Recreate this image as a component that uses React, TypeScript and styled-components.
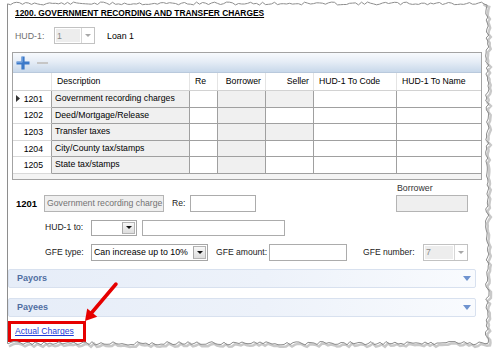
import React from 'react';
import styled, { createGlobalStyle } from 'styled-components';

const GlobalStyle = createGlobalStyle`
  html, body { margin: 0; padding: 0; background: #fff; }
  body { font-family: "Liberation Sans", Arial, sans-serif; color: #000; }
  * { box-sizing: border-box; }
`;

const Page = styled.div`
  position: relative;
  width: 495px;
  height: 350px;
  overflow: hidden;
  background: #fff;
`;

const Sheet = styled.div`
  margin-left: 7px;
  width: 482px;
  height: 350px;
  border-left: 1px solid #8c8c8c;
  display: flex;
  flex-direction: column;
  align-items: flex-start;
`;

const Title = styled.h1`
  margin: 8px 0 0 7px;
  font-size: 8.4px;
  line-height: 11px;
  font-weight: bold;
  text-decoration: underline;
  white-space: nowrap;
`;

const HudRow = styled.div`
  display: flex;
  align-items: center;
  height: 17px;
  margin: 8px 0 0 7px;
  font-size: 8.8px;
`;

const MutedLabel = styled.span`
  width: 39px;
  color: #707070;
`;

const LoanName = styled.span`
  margin-left: 12px;
`;

/* combo box */
const ComboBox = styled.div<{ $w: number; $h: number; $disabled?: boolean }>`
  display: flex;
  width: ${(p) => p.$w}px;
  height: ${(p) => p.$h}px;
  border: 1px solid ${(p) => (p.$disabled ? '#c2c2c2' : '#a6a6a6')};
  background: #fff;
  flex-shrink: 0;
`;

const ComboValue = styled.div<{ $disabled?: boolean }>`
  flex: 1;
  margin: ${(p) => (p.$disabled ? '1px' : '0')};
  padding-left: ${(p) => (p.$disabled ? '1px' : '2px')};
  background: ${(p) => (p.$disabled ? '#ededed' : '#fff')};
  color: ${(p) => (p.$disabled ? '#8a8a8a' : '#000')};
  font-size: 8.8px;
  display: flex;
  align-items: center;
  white-space: nowrap;
  overflow: hidden;
`;

const DropButton = styled.div<{ $disabled?: boolean }>`
  width: 13px;
  display: flex;
  align-items: center;
  justify-content: center;
  margin: ${(p) => (p.$disabled ? '0' : '1px')};
  border: ${(p) => (p.$disabled ? 'none' : '1px solid #b4b4b4')};
  border-left: 1px solid ${(p) => (p.$disabled ? '#d6d6d6' : '#a9a9a9')};
  background: ${(p) => (p.$disabled ? '#fff' : 'linear-gradient(#f7f7f7, #dddddd)')};
`;

const Caret = styled.span<{ $disabled?: boolean }>`
  width: 0;
  height: 0;
  border-left: 3px solid transparent;
  border-right: 3px solid transparent;
  border-top: 3px solid ${(p) => (p.$disabled ? '#a8a8a8' : '#111')};
`;

const Combo = ({ width, height, value, disabled }: { width: number; height: number; value: string; disabled?: boolean }) => (
  <ComboBox $w={width} $h={height} $disabled={disabled}>
    <ComboValue $disabled={disabled}>{value}</ComboValue>
    <DropButton $disabled={disabled}>
      <Caret $disabled={disabled} />
    </DropButton>
  </ComboBox>
);

/* grid */
const COLS = '39px 138px 28px 48px 48px 83px 84px';

const GridPanel = styled.div`
  margin: 8px 0 0 4px;
  width: 470px;
  border: 1px solid #a3a3a3;
  background: #fff;
`;

const Toolbar = styled.div`
  height: 20px;
  display: flex;
  align-items: center;
  gap: 7px;
  padding-left: 3px;
  background: linear-gradient(to bottom, #f7fafd 0%, #e6edf6 45%, #c8d8ea 100%);
  border-bottom: 1px solid #b9c9dc;
`;

const HeaderRow = styled.div`
  display: grid;
  grid-template-columns: ${COLS};
  height: 18px;
  border-bottom: 1px solid #d2d2d2;
`;

const HeaderCell = styled.div<{ $align?: 'left' | 'right'; $last?: boolean }>`
  font-size: 8.7px;
  line-height: 17px;
  padding: 0 4px 0 5px;
  text-align: ${(p) => p.$align ?? 'left'};
  border-right: ${(p) => (p.$last ? 'none' : '1px solid #e4e4e4')};
  white-space: nowrap;
  overflow: hidden;
`;

const BodyRow = styled.div`
  display: grid;
  grid-template-columns: ${COLS};
  height: 16.6px;
`;

const RowHead = styled.div`
  display: flex;
  align-items: center;
  justify-content: space-between;
  padding: 0 8px 0 3px;
  font-size: 8.7px;
  border-right: 1px solid #a0a0a0;
  border-bottom: 1px solid #d9d9d9;
  background: #fff;
`;

const Cell = styled.div<{ $gray?: boolean; $last?: boolean }>`
  font-size: 8.7px;
  line-height: 15.6px;
  padding-left: 3px;
  white-space: nowrap;
  overflow: hidden;
  background: ${(p) => (p.$gray ? '#f0f0f0' : '#fff')};
  border-right: ${(p) => (p.$last ? 'none' : '1px solid #a0a0a0')};
  border-bottom: 1px solid #a0a0a0;
`;

const GridFiller = styled.div`
  height: 5px;
  background: #f4f4f4;
`;

/* form */
const FormRow = styled.div<{ $mt: number; $pl: number; $h: number; $bottom?: boolean }>`
  display: flex;
  align-items: ${(p) => (p.$bottom ? 'flex-end' : 'center')};
  margin-top: ${(p) => p.$mt}px;
  padding-left: ${(p) => p.$pl}px;
  height: ${(p) => p.$h}px;
`;

const FieldLabel = styled.span<{ $w: number; $ml?: number; $bold?: boolean }>`
  width: ${(p) => p.$w}px;
  margin-left: ${(p) => p.$ml ?? 0}px;
  flex-shrink: 0;
  font-size: ${(p) => (p.$bold ? '9.5px' : '8.6px')};
  font-weight: ${(p) => (p.$bold ? 'bold' : 'normal')};
  color: ${(p) => (p.$bold ? '#000' : '#222')};
  white-space: nowrap;
  line-height: 17px;
`;

const TextBox = styled.div<{ $w: number; $h: number; $ml?: number; $disabled?: boolean }>`
  width: ${(p) => p.$w}px;
  height: ${(p) => p.$h}px;
  margin-left: ${(p) => p.$ml ?? 0}px;
  flex-shrink: 0;
  border: 1px solid ${(p) => (p.$disabled ? '#b4b4b4' : '#acacac')};
  background: ${(p) => (p.$disabled ? '#efefef' : '#fff')};
  color: #737373;
  font-size: 8.7px;
  line-height: 15px;
  padding-left: 2px;
  white-space: nowrap;
  overflow: hidden;
`;

const StackedField = styled.div<{ $ml: number }>`
  display: flex;
  flex-direction: column;
  gap: 1px;
  margin-left: ${(p) => p.$ml}px;
`;

const Caption = styled.span`
  font-size: 8.8px;
  line-height: 11px;
  color: #333;
  padding-left: 1px;
`;

const Spacer = styled.span<{ $w: number }>`
  width: ${(p) => p.$w}px;
  flex-shrink: 0;
`;

/* collapsible sections */
const Section = styled.div<{ $mt: number }>`
  margin-top: ${(p) => p.$mt}px;
  width: 468px;
  height: 19px;
  display: flex;
  align-items: center;
  justify-content: space-between;
  padding: 0 4px 0 8px;
  border: 1px solid #d8e1ef;
  border-radius: 2px;
  background: linear-gradient(to right, #e6edf8 0%, #edf2fa 55%, #f9fbfe 100%);
  font-size: 9px;
  font-weight: bold;
  color: #4f6ea2;
`;

const SectionCaret = styled.span`
  width: 0;
  height: 0;
  border-left: 4.5px solid transparent;
  border-right: 4.5px solid transparent;
  border-top: 5px solid #6f93cf;
`;

const Highlight = styled.div`
  margin-top: 4px;
  width: 78px;
  height: 21px;
  border: 3px solid #e60000;
  padding-left: 4px;
  display: flex;
  align-items: center;
`;

const ActionLink = styled.a`
  font-size: 8.6px;
  color: #1c3bd8;
  text-decoration: underline;
  white-space: nowrap;
`;

const Overlay = styled.svg`
  position: absolute;
  left: 0;
  top: 0;
  pointer-events: none;
`;

/* data */
const rows = [
  { no: '1201', desc: 'Government recording charges', sellerGray: true, current: true },
  { no: '1202', desc: 'Deed/Mortgage/Release', sellerGray: false },
  { no: '1203', desc: 'Transfer taxes', sellerGray: true },
  { no: '1204', desc: 'City/County tax/stamps', sellerGray: false },
  { no: '1205', desc: 'State tax/stamps', sellerGray: false },
];

function tornPoints(): string {
  let s = 11;
  const r = () => {
    s = (s * 9301 + 49297) % 233280;
    return s / 233280;
  };
  const pts: string[] = [];
  for (let x = 7.5; x <= 486; x += 3) pts.push(`${x},${(2 + r() * 3).toFixed(1)}`);
  for (let y = 5; y <= 342; y += 3) pts.push(`${(485.5 + r() * 3.5).toFixed(1)},${y}`);
  for (let x = 488; x >= 8; x -= 3) pts.push(`${x},${(341.5 + r() * 3.5).toFixed(1)}`);
  pts.push('7.5,343');
  return pts.join(' ');
}

const TORN = tornPoints();
const SHADOW = TORN.split(' ')
  .filter((p) => {
    const [x, y] = p.split(',').map(Number);
    return x > 480 || y > 330;
  })
  .join(' ');

const TornEdge = () => (
  <Overlay width={495} height={350} viewBox="0 0 495 350">
    <path d={`M0 0H495V350H0Z M${TORN.replace(/ /g, ' L')}Z`} fill="#fff" fillRule="evenodd" />
    <polyline points={SHADOW} transform="translate(2,2)" fill="none" stroke="#c9c9c9" strokeWidth={2.5} />
    <polygon points={TORN} fill="none" stroke="#8e8e8e" strokeWidth={1} />
  </Overlay>
);

const PointerArrow = () => (
  <Overlay width={495} height={350} viewBox="0 0 495 350">
    <line x1={116} y1={284} x2={91} y2={313.5} stroke="#e60000" strokeWidth={3.5} strokeLinecap="round" />
    <polygon points="85,321 97.2,316.8 87.2,308.4" fill="#e60000" />
  </Overlay>
);

export default function App() {
  return (
    <Page>
      <GlobalStyle />
      <Sheet>
        <Title>1200. GOVERNMENT RECORDING AND TRANSFER CHARGES</Title>

        <HudRow>
          <MutedLabel>HUD-1:</MutedLabel>
          <Combo width={41} height={17} value="1" disabled />
          <LoanName>Loan 1</LoanName>
        </HudRow>

        <GridPanel>
          <Toolbar>
            <svg width={14} height={14} viewBox="0 0 14 14">
              <path d="M7 0.5V13.5M0.5 7H13.5" stroke="#3b79c9" strokeWidth={3.2} />
              <path d="M6.2 1V6.2H1" stroke="#8fb8e8" strokeWidth={0.8} fill="none" />
            </svg>
            <svg width={11} height={4} viewBox="0 0 11 4">
              <rect x={0} y={1} width={11} height={2} fill="#c6c6c6" />
            </svg>
          </Toolbar>
          <HeaderRow>
            <HeaderCell />
            <HeaderCell>Description</HeaderCell>
            <HeaderCell>Re</HeaderCell>
            <HeaderCell $align="right">Borrower</HeaderCell>
            <HeaderCell $align="right">Seller</HeaderCell>
            <HeaderCell>HUD-1 To Code</HeaderCell>
            <HeaderCell $last>HUD-1 To Name</HeaderCell>
          </HeaderRow>
          {rows.map((row) => (
            <BodyRow key={row.no}>
              <RowHead>
                {row.current ? (
                  <svg width={4} height={7} viewBox="0 0 4 7">
                    <path d="M0 0L4 3.5L0 7Z" fill="#333" />
                  </svg>
                ) : (
                  <span />
                )}
                <span>{row.no}</span>
              </RowHead>
              <Cell $gray>{row.desc}</Cell>
              <Cell />
              <Cell $gray />
              <Cell $gray={row.sellerGray} />
              <Cell />
              <Cell $last />
            </BodyRow>
          ))}
          <GridFiller />
        </GridPanel>

        <FormRow $mt={3} $pl={8} $h={29} $bottom>
          <FieldLabel $w={28} $bold>1201</FieldLabel>
          <TextBox $w={120} $h={17} $disabled>Government recording charge</TextBox>
          <FieldLabel $w={18} $ml={8}>Re:</FieldLabel>
          <TextBox $w={66} $h={17} />
          <StackedField $ml={140}>
            <Caption>Borrower</Caption>
            <TextBox $w={72} $h={17} $disabled />
          </StackedField>
        </FormRow>

        <FormRow $mt={8} $pl={37} $h={16}>
          <FieldLabel $w={46}>HUD-1 to:</FieldLabel>
          <Combo width={46} height={16} value="" />
          <TextBox $w={143} $h={16} $ml={5} />
        </FormRow>

        <FormRow $mt={8} $pl={37} $h={17}>
          <FieldLabel $w={46}>GFE type:</FieldLabel>
          <Combo width={117} height={17} value="Can increase up to 10%" />
          <FieldLabel $w={53} $ml={8}>GFE amount:</FieldLabel>
          <TextBox $w={78} $h={17} />
          <Spacer $w={16} />
          <FieldLabel $w={60}>GFE number:</FieldLabel>
          <Combo width={45} height={17} value="7" disabled />
        </FormRow>

        <Section $mt={8}>
          Payors
          <SectionCaret />
        </Section>
        <Section $mt={10}>
          Payees
          <SectionCaret />
        </Section>

        <Highlight>
          <ActionLink href="#">Actual Charges</ActionLink>
        </Highlight>
      </Sheet>
      <TornEdge />
      <PointerArrow />
    </Page>
  );
}
